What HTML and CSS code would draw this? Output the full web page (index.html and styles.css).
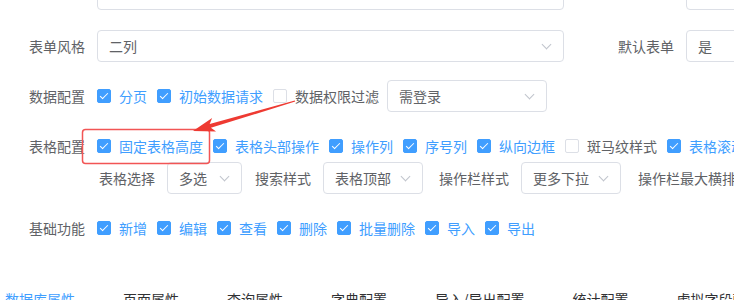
FILE: index.html
```html
<!DOCTYPE html>
<html lang="zh-CN">
<head>
  <meta charset="UTF-8" />
  <meta name="viewport" content="width=device-width, initial-scale=1" />
  <title>表单配置</title>
  <link rel="stylesheet" href="styles.css">
</head>
<body>

<div class="page">
  <!-- form settings -->
  <div class="form">
    <div class="row row-first">
      <div class="item">
        <span class="label"></span>
        <div class="input input-wide"></div>
      </div>
      <div class="item">
        <span class="label label-right"></span>
        <div class="input input-rest"></div>
      </div>
    </div>

    <div class="row">
      <div class="item">
        <span class="label">表单风格</span>
        <div class="select input-wide"><span>二列</span><i class="arrow"></i></div>
      </div>
      <div class="item">
        <span class="label label-right">默认表单</span>
        <div class="select input-rest"><span>是</span></div>
      </div>
    </div>

    <div class="row">
      <span class="label">数据配置</span>
      <label class="check is-checked"><i class="box"></i>分页</label>
      <label class="check is-checked"><i class="box"></i>初始数据请求</label>
      <label class="check check-tight"><i class="box"></i>数据权限过滤</label>
      <div class="select select-login"><span>需登录</span><i class="arrow"></i></div>
    </div>

    <div class="row-group">
      <div class="row row-inner">
        <span class="label">表格配置</span>
        <label class="check is-checked"><i class="box"></i>固定表格高度</label>
        <label class="check is-checked"><i class="box"></i>表格头部操作</label>
        <label class="check is-checked"><i class="box"></i>操作列</label>
        <label class="check is-checked"><i class="box"></i>序号列</label>
        <label class="check is-checked"><i class="box"></i>纵向边框</label>
        <label class="check"><i class="box"></i>斑马纹样式</label>
        <label class="check is-checked"><i class="box"></i>表格滚动条</label>
      </div>
      <div class="row row-inner row-sub">
        <span class="sub-label lw-70">表格选择</span>
        <div class="select select-s"><span>多选</span><i class="arrow"></i></div>
        <span class="sub-label lw-81">搜索样式</span>
        <div class="select select-m"><span>表格顶部</span><i class="arrow"></i></div>
        <span class="sub-label lw-98">操作栏样式</span>
        <div class="select select-m"><span>更多下拉</span><i class="arrow"></i></div>
        <span class="sub-label lw-117">操作栏最大横排数</span>
      </div>
    </div>

    <div class="row">
      <span class="label">基础功能</span>
      <label class="check is-checked"><i class="box"></i>新增</label>
      <label class="check is-checked"><i class="box"></i>编辑</label>
      <label class="check is-checked"><i class="box"></i>查看</label>
      <label class="check is-checked"><i class="box"></i>删除</label>
      <label class="check is-checked"><i class="box"></i>批量删除</label>
      <label class="check is-checked"><i class="box"></i>导入</label>
      <label class="check is-checked"><i class="box"></i>导出</label>
    </div>
  </div>

  <!-- tabs -->
  <div class="tabs">
    <span class="tab active">数据库属性</span>
    <span class="tab">页面属性</span>
    <span class="tab">查询属性</span>
    <span class="tab">字典配置</span>
    <span class="tab">导入/导出配置</span>
    <span class="tab">统计配置</span>
    <span class="tab">虚拟字段配置</span>
  </div>

  <!-- annotation over the form -->
  <svg class="annotation" width="734" height="300" viewBox="0 0 734 300">
    <rect x="82.5" y="129.5" width="127" height="34" rx="3" fill="none" stroke="#f25555" stroke-width="1.5"/>
    <polygon fill="#ee3a32" points="193,131 212.1,118.1 209.7,124 294.8,100.4 295.2,101.6 210.9,127.8 216.1,131.5"/>
  </svg>
</div>

</body>
</html>
```

FILE: styles.css
```css
    body {
      margin: 0;
      font-family: "Noto Sans CJK SC", "Noto Sans", sans-serif;
      font-size: 14px;
      color: #606266;
      background: #fff;
      overflow: hidden;
      height: 300px;
    }
    .page {
      position: relative;
      width: 734px;
      height: 300px;
      overflow: hidden;
    }
    .form {
      margin-top: -22px;
    }
    .row {
      display: flex;
      align-items: center;
      height: 32px;
      margin-bottom: 18px;
      white-space: nowrap;
    }
    .row-first {
      margin-bottom: 20px;
    }
    .row-group {
      margin-bottom: 18px;
    }
    .row-inner {
      margin-bottom: 0;
    }
    .item {
      display: flex;
      align-items: center;
    }
    .label {
      width: 97px;
      padding-right: 12px;
      box-sizing: border-box;
      text-align: right;
      flex-shrink: 0;
    }
    .label-right {
      width: 122px;
    }
    .sub-label {
      padding-right: 12px;
      box-sizing: border-box;
      text-align: right;
      flex-shrink: 0;
    }
    .lw-70 { width: 70px; margin-left: 97px; }
    .lw-81 { width: 81px; }
    .lw-98 { width: 98px; }
    .lw-117 { padding-left: 17px; }

    .input, .select {
      height: 32px;
      box-sizing: border-box;
      border: 1px solid #dcdfe6;
      border-radius: 4px;
      background: #fff;
      flex-shrink: 0;
    }
    .select {
      display: flex;
      align-items: center;
      padding-left: 11px;
    }
    .input-wide { width: 467px; }
    .input-rest { width: 200px; }
    .select-login { width: 160px; }
    .select-s { width: 75px; }
    .select-m { width: 100px; }
    .arrow {
      margin-left: auto;
      margin-right: 13px;
      width: 7px;
      height: 7px;
      box-sizing: border-box;
      border-right: 1px solid #c0c4cc;
      border-bottom: 1px solid #c0c4cc;
      transform: translateY(-2px) rotate(45deg);
    }

    .check {
      display: flex;
      align-items: center;
      margin-right: 10px;
      color: #606266;
      flex-shrink: 0;
    }
    .check-tight {
      margin-right: 8px;
    }
    .check .box {
      position: relative;
      width: 14px;
      height: 14px;
      box-sizing: border-box;
      border: 1px solid #dcdfe6;
      border-radius: 2px;
      background: #fff;
      margin-right: 8px;
    }
    .check.is-checked {
      color: #409eff;
    }
    .check.is-checked .box {
      background: #409eff;
      border-color: #409eff;
    }
    .check.is-checked .box::after {
      content: "";
      position: absolute;
      left: 4px;
      top: 1px;
      width: 3px;
      height: 7px;
      border-right: 1px solid #fff;
      border-bottom: 1px solid #fff;
      transform: rotate(45deg);
    }

    .tabs {
      display: flex;
      gap: 48px;
      padding-left: 5px;
      margin-top: 45px;
      line-height: 20px;
      color: #303133;
      white-space: nowrap;
    }
    .tab.active {
      color: #409eff;
    }

    .annotation {
      position: absolute;
      top: 0;
      left: 0;
      pointer-events: none;
    }
```
